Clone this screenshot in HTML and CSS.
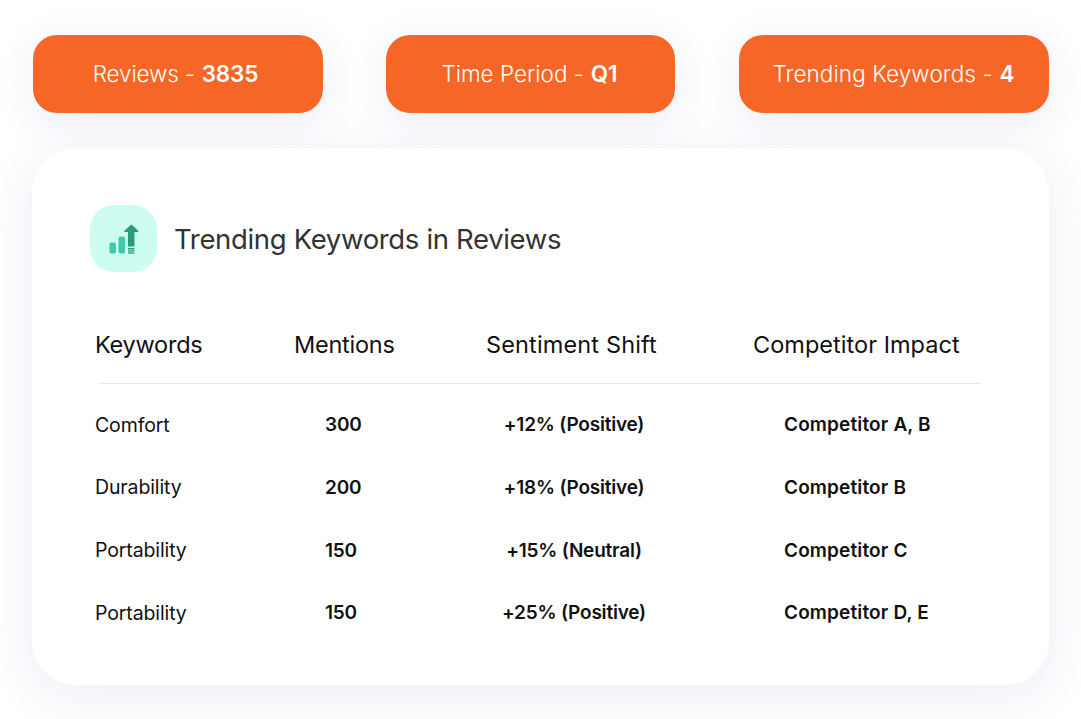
FILE: index.html
```html
<!DOCTYPE html>
<html lang="en">
<head>
<meta charset="utf-8">
<title>Trending Keywords</title>
<link rel="stylesheet" href="styles.css">
</head>
<body>
<main class="page">
  <section class="pills">
    <div class="pill pill-a">Reviews - <b>3835</b></div>
    <div class="pill pill-b">Time Period - <b>Q1</b></div>
    <div class="pill pill-c">Trending Keywords - <b>4</b></div>
  </section>
  <section class="card">
    <header class="card-head">
      <div class="icon-box">
        <svg width="34" height="34" viewBox="0 0 34 34" aria-hidden="true">
          <rect x="2.500" y="20.500" width="6.500" height="11" rx="2" fill="#3ec9a7"/>
          <rect x="11.500" y="14.500" width="6.500" height="17" rx="2" fill="#3ec9a7"/>
          <path d="M24.500 2.500l6.500 6q1 1.500-1 1.500h-2.500v14.500h-6.500v-14.500h-2.500q-2 0-1-1.500z" fill="#2a9d78"/>
          <rect x="21" y="26" width="6.500" height="1.500" fill="#2a9d78"/>
          <rect x="21" y="28.300" width="6.500" height="1.300" fill="#2a9d78"/>
          <rect x="21" y="30.300" width="6.500" height="1.300" fill="#2a9d78"/>
        </svg>
      </div>
      <h1 class="title">Trending Keywords in Reviews</h1>
    </header>
    <div class="table">
      <div class="row head">
        <span class="c1">Keywords</span>
        <span class="c2">Mentions</span>
        <span class="c3">Sentiment Shift</span>
        <span class="c4">Competitor Impact</span>
      </div>
      <div class="row body">
        <span class="c1">Comfort</span>
        <span class="c2"><b>300</b></span>
        <span class="c3"><b>+12% (Positive)</b></span>
        <span class="c4"><b>Competitor A, B</b></span>
      </div>
      <div class="row body">
        <span class="c1">Durability</span>
        <span class="c2"><b>200</b></span>
        <span class="c3"><b>+18% (Positive)</b></span>
        <span class="c4"><b>Competitor B</b></span>
      </div>
      <div class="row body">
        <span class="c1">Portability</span>
        <span class="c2"><b>150</b></span>
        <span class="c3"><b>+15% (Neutral)</b></span>
        <span class="c4"><b>Competitor C</b></span>
      </div>
      <div class="row body">
        <span class="c1">Portability</span>
        <span class="c2"><b>150</b></span>
        <span class="c3"><b>+25% (Positive)</b></span>
        <span class="c4"><b>Competitor D, E</b></span>
      </div>
    </div>
  </section>
</main>
</body>
</html>
```
FILE: styles.css
```css
* { box-sizing: border-box; }
html, body { margin: 0; height: 100%; background: #fff; overflow: hidden; }
body { font-family: "Inter", "Liberation Sans", sans-serif; color: #111; }
.page { width: 1081px; height: 719px; padding: 35px 32px 0 32px; }
.pills { display: flex; margin-left: 1px; }
.pill {
  height: 78px; border-radius: 24px; background: #f56627; color: #fff;
  display: flex; align-items: center; justify-content: center; gap: .3em;
  font-size: 22.500px; font-weight: 300; letter-spacing: -.1px;
  padding-bottom: 2px;
  box-shadow: 0 8px 40px rgba(80, 80, 170, .10);
}
.pill b { font-weight: 600; }
.pill-a { width: 290px; margin-right: 63px; padding-right: 5px; letter-spacing: -.15px; }
.pill-b { width: 289px; margin-right: 64px; padding-right: 2px; letter-spacing: 0; }
.pill-c { width: 310px; padding-right: 1px; letter-spacing: .1px; }
.card {
  margin-top: 35px; width: 1017px; height: 537px; border-radius: 44px; background: #fff;
  padding: 57px 68px 0 58px;
  box-shadow: 0 10px 50px rgba(80, 80, 170, .11);
}
.card-head { display: flex; align-items: center; gap: 17px; }
.icon-box {
  width: 67px; height: 67px; border-radius: 24px; background: #cdfdf1;
  display: flex; align-items: center; justify-content: center;
}
.title { margin: 0; font-size: 27.500px; font-weight: 400; color: #333; letter-spacing: -.34px; }
.table { margin-top: 51px; padding-left: 5px; }
.row { display: grid; align-items: center; }
.head {
  height: 61px; font-size: 23.500px; letter-spacing: -.15px; padding-bottom: 17px;
  border-bottom: 1px solid #e6e8ee; margin-left: 3px;
  grid-template-columns: 196px 192px 268px 1fr;
}
.head .c1 { margin-left: -3px; letter-spacing: -.25px; }
.head .c2 { letter-spacing: -.25px; }
.head .c3 { letter-spacing: .14px; }
.head .c4 { letter-spacing: .03px; margin-left: -1px; }
.head span { white-space: nowrap; }
.body {
  height: 62.700px; font-size: 19px; letter-spacing: -.2px;
  grid-template-columns: 199px 192px 268px 1fr;
}
.body b { font-weight: 600; }
.body .c1 { font-size: 19.500px; letter-spacing: -.12px; }
.body .c2 { padding-left: 31px; }
.body .c3 { width: 176px; text-align: center; white-space: nowrap; }
.body .c4 { padding-left: 30px; letter-spacing: .14px; }
.table .row.body:nth-child(2) { margin-top: 9.300px; }
```
